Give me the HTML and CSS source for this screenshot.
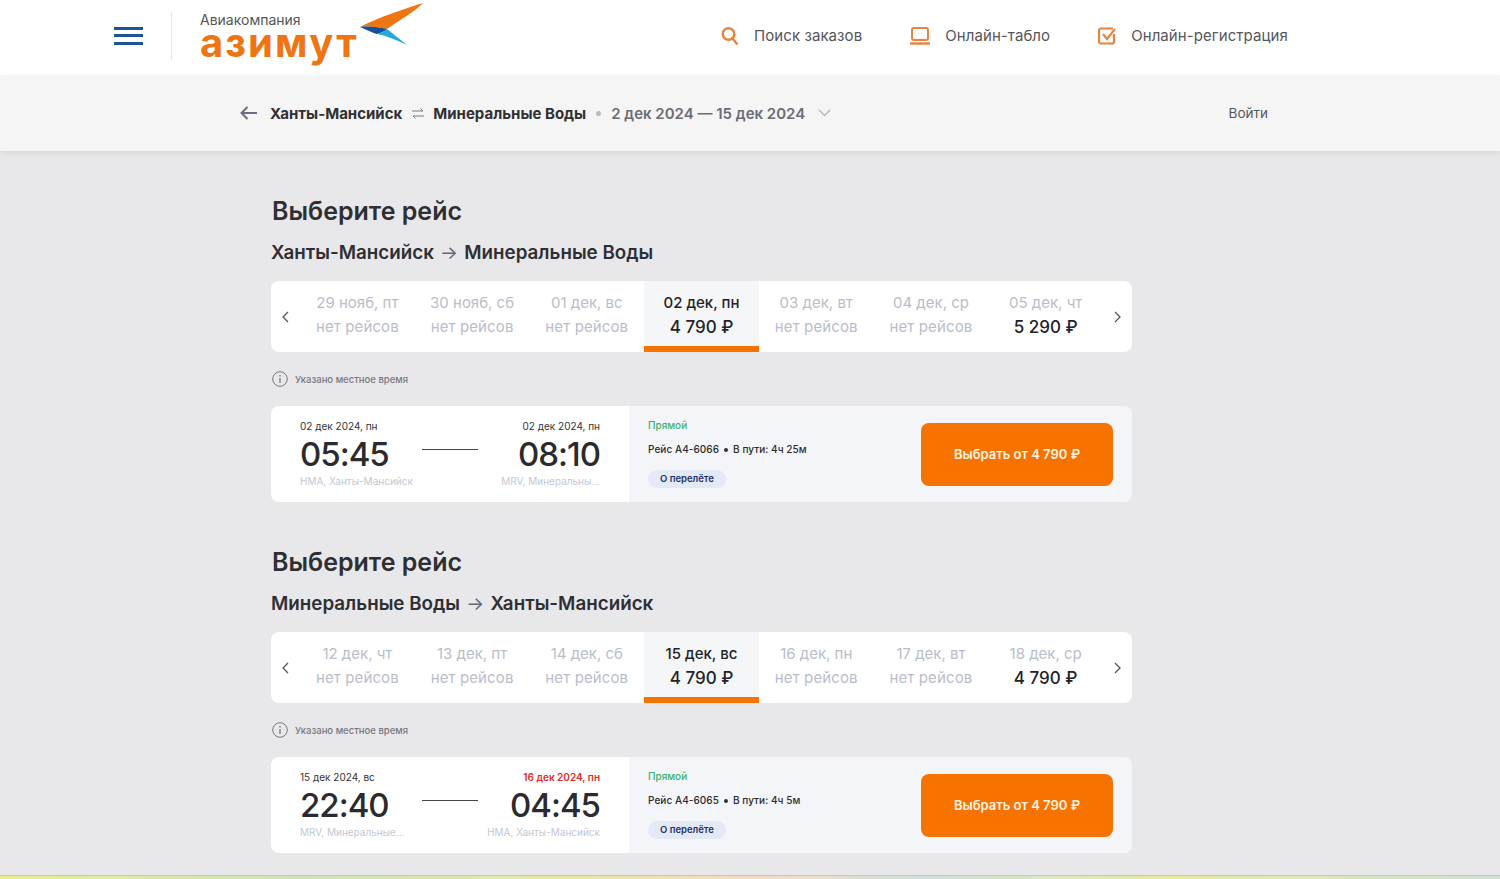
FILE: index.html
```html
<!DOCTYPE html>
<html lang="ru">
<head>
  <meta charset="UTF-8" />
  <title>Азимут - Выберите рейс</title>
  <link rel="stylesheet" href="styles.css">
</head>
<body>
  <header class="top-bar">
    <button class="burger"><span></span><span></span><span></span></button>
    <div class="logo">
      <div class="logo-small">Авиакомпания</div>
      <div class="logo-big">азимут</div>
      <svg class="logo-wing" width="66" height="44" viewBox="0 0 66 44">
        <path d="M64 1C48 6 20 15 1 25C10 24 20 25 28 27C40 18 56 10 64 1Z" fill="#ee7512"/>
        <path d="M1 25C8 28 14 31 18 32C22 31 26 29 28 27C20 25 10 24 1 25Z" fill="#134f9c"/>
        <path d="M18 32C22 31 26 29 28 27L48 43C38 38 28 34 18 32Z" fill="#23a9d6"/>
      </svg>
    </div>
    <nav class="top-nav">
      <a class="nav-link">
        <svg width="18" height="20" viewBox="0 0 18 20" fill="none" stroke="#e8823c" stroke-width="2.400"><circle cx="7.500" cy="8" r="5.800"/><path d="M11.500 12.500L16.500 18.500"/></svg>
        Поиск заказов
      </a>
      <a class="nav-link">
        <svg width="20" height="18" viewBox="0 0 20 18" fill="none" stroke="#e8823c" stroke-width="2"><rect x="2" y="1" width="16" height="12" rx="2"/><path d="M0 16.500H20" stroke-width="2.400"/></svg>
        Онлайн-табло
      </a>
      <a class="nav-link">
        <svg width="18" height="18" viewBox="0 0 18 18" fill="none" stroke="#e8823c" stroke-width="2.200"><path d="M15 1.500H3a2 2 0 0 0-2 2v11a2 2 0 0 0 2 2h11a2 2 0 0 0 2-2V7"/><path d="M5 7L9 12L17 2"/></svg>
        Онлайн-регистрация
      </a>
    </nav>
  </header>

  <div class="sub-bar">
    <svg width="17" height="14" viewBox="0 0 17 14" fill="none" stroke="#6c6c80" stroke-width="2"><path d="M17 7H2M7.500 1L1.500 7L7.500 13"/></svg>
    <b class="sub-city first">Ханты-Мансийск</b>
    <svg class="swap" width="12" height="11" viewBox="0 0 12 11" fill="none" stroke="#77778a"><path d="M0 3H11M8.500 .5L11 3M12 8H1M3.500 10.500L1 8"/></svg>
    <b class="sub-city">Минеральные Воды</b>
    <i class="sub-dot"></i>
    <span class="sub-dates">2 дек 2024 — 15 дек 2024</span>
    <svg class="sub-chevron" width="13" height="8" viewBox="0 0 13 8" fill="none" stroke="#b4b8c6" stroke-width="1.500"><path d="M1 1L6.500 6.500L12 1"/></svg>
    <a class="login">Войти</a>
  </div>

  <main>
    <section class="leg">
      <h1>Выберите рейс</h1>
      <h2>Ханты-Мансийск <span class="route-arrow">→</span> Минеральные Воды</h2>
      <div class="dates">
        <div class="arrow"><svg width="7" height="12" viewBox="0 0 7 12" fill="none" stroke="#555" stroke-width="1.300"><path d="M6 1L1 6L6 11"/></svg></div>
        <div class="day"><span>29 нояб, пт</span><span class="none">нет рейсов</span></div>
        <div class="day"><span>30 нояб, сб</span><span class="none">нет рейсов</span></div>
        <div class="day"><span>01 дек, вс</span><span class="none">нет рейсов</span></div>
        <div class="day active"><span>02 дек, пн</span><span class="price">4 790 ₽</span></div>
        <div class="day"><span>03 дек, вт</span><span class="none">нет рейсов</span></div>
        <div class="day"><span>04 дек, ср</span><span class="none">нет рейсов</span></div>
        <div class="day"><span>05 дек, чт</span><span class="price">5 290 ₽</span></div>
        <div class="arrow"><svg width="7" height="12" viewBox="0 0 7 12" fill="none" stroke="#555" stroke-width="1.300"><path d="M1 1L6 6L1 11"/></svg></div>
      </div>
      <div class="note">
        <svg width="16" height="16" viewBox="0 0 16 16" fill="none" stroke="#77777f"><circle cx="8" cy="8" r="7.300"/><path d="M8 7V12M8 4V5.500" stroke-width="1.300"/></svg>
        Указано местное время
      </div>
      <div class="flight">
        <div class="flight-times">
          <div class="point">
            <div class="f-date">02 дек 2024, пн</div>
            <div class="f-time">05:45</div>
            <div class="f-place">HMA, Ханты-Мансийск</div>
          </div>
          <div class="f-line"></div>
          <div class="point end">
            <div class="f-date">02 дек 2024, пн</div>
            <div class="f-time">08:10</div>
            <div class="f-place">MRV, Минеральны...</div>
          </div>
        </div>
        <div class="flight-info">
          <div class="info-text">
            <div class="direct">Прямой</div>
            <div class="f-number">Рейс А4-6066 <i></i> В пути: 4ч 25м</div>
            <span class="about">О перелёте</span>
          </div>
          <button class="choose">Выбрать от 4 790 ₽</button>
        </div>
      </div>
    </section>

    <section class="leg">
      <h1>Выберите рейс</h1>
      <h2>Минеральные Воды <span class="route-arrow">→</span> Ханты-Мансийск</h2>
      <div class="dates">
        <div class="arrow"><svg width="7" height="12" viewBox="0 0 7 12" fill="none" stroke="#555" stroke-width="1.300"><path d="M6 1L1 6L6 11"/></svg></div>
        <div class="day"><span>12 дек, чт</span><span class="none">нет рейсов</span></div>
        <div class="day"><span>13 дек, пт</span><span class="none">нет рейсов</span></div>
        <div class="day"><span>14 дек, сб</span><span class="none">нет рейсов</span></div>
        <div class="day active"><span>15 дек, вс</span><span class="price">4 790 ₽</span></div>
        <div class="day"><span>16 дек, пн</span><span class="none">нет рейсов</span></div>
        <div class="day"><span>17 дек, вт</span><span class="none">нет рейсов</span></div>
        <div class="day"><span>18 дек, ср</span><span class="price">4 790 ₽</span></div>
        <div class="arrow"><svg width="7" height="12" viewBox="0 0 7 12" fill="none" stroke="#555" stroke-width="1.300"><path d="M1 1L6 6L1 11"/></svg></div>
      </div>
      <div class="note">
        <svg width="16" height="16" viewBox="0 0 16 16" fill="none" stroke="#77777f"><circle cx="8" cy="8" r="7.300"/><path d="M8 7V12M8 4V5.500" stroke-width="1.300"/></svg>
        Указано местное время
      </div>
      <div class="flight">
        <div class="flight-times">
          <div class="point">
            <div class="f-date">15 дек 2024, вс</div>
            <div class="f-time">22:40</div>
            <div class="f-place">MRV, Минеральные...</div>
          </div>
          <div class="f-line"></div>
          <div class="point end">
            <div class="f-date next-day">16 дек 2024, пн</div>
            <div class="f-time">04:45</div>
            <div class="f-place">HMA, Ханты-Мансийск</div>
          </div>
        </div>
        <div class="flight-info">
          <div class="info-text">
            <div class="direct">Прямой</div>
            <div class="f-number">Рейс А4-6065 <i></i> В пути: 4ч 5м</div>
            <span class="about">О перелёте</span>
          </div>
          <button class="choose">Выбрать от 4 790 ₽</button>
        </div>
      </div>
    </section>
  </main>
  <div class="bottom-strip"></div>
</body>
</html>
```

FILE: styles.css
```css
* { margin:0; padding:0; box-sizing:border-box; }
html, body { height:879px; overflow:hidden; }
body { font-family:'Inter','Liberation Sans',sans-serif; background:#e8e8ea; color:#2b2b2f; }
button { font-family:inherit; border:none; background:none; cursor:pointer; }

.top-bar { height:75px; background:#fff; display:flex; align-items:center; padding:0 0 4px 114px; }
.burger { width:29px; height:18px; display:flex; flex-direction:column; justify-content:space-between; }
.burger span { display:block; height:3px; background:#1b5596; }
.logo { position:relative; width:253px; height:48px; margin-left:28px; padding-left:28px; border-left:1px solid #e4e4e4; }
.logo-small { font-size:14px; line-height:16px; color:#555; }
.logo-big { font-size:40px; line-height:33px; font-weight:700; color:#ee7512; letter-spacing:2px; margin-top:-2px; }
.logo-wing { position:absolute; left:187px; top:-10px; }

.top-nav { display:flex; margin-left:297px; gap:48px; }
.nav-link { display:flex; align-items:center; gap:15px; font-size:15px; letter-spacing:0.08px; color:#55555a; }

.sub-bar { height:76px; background:#f5f5f5; box-shadow:0 2px 6px rgba(0,0,0,0.08); display:flex; align-items:center; padding:0 232px 0 240px; position:relative; }
.sub-city { font-size:15px; font-weight:700; color:#303034; }
.sub-city.first { margin-left:13px; }
.swap { margin:0 9px 0 10px; }
.sub-dot { width:5px; height:5px; border-radius:50%; background:#b9bcc6; margin:0 10px; }
.sub-dates { font-size:15px; font-weight:600; color:#6c6c78; }
.sub-chevron { margin-left:13px; }
.login { margin-left:auto; font-size:13.500px; color:#55555a; }

main { width:861px; margin-left:271px; height:724px; padding-top:45px; }
.leg { margin-bottom:45px; }
h1 { font-size:25px; line-height:30px; font-weight:600; color:#2f2f33; padding-left:1px; }
h2 { font-size:18.800px; line-height:24px; font-weight:600; color:#2f2f33; margin-top:15px; }
.route-arrow { color:#66667a; font-weight:400; margin:0 1.500px; }

.dates { margin-top:16px; height:71px; background:#fff; border-radius:8px; display:flex; overflow:hidden; }
.arrow { width:29px; display:flex; align-items:center; justify-content:center; }
.day { flex:1; display:flex; flex-direction:column; align-items:center; padding-top:10px; font-size:15px; line-height:24px; color:#b9bdca; white-space:nowrap; }
.day .none { letter-spacing:0.12px; }
.day .price { color:#232327; font-size:17px; font-weight:500; }
.day.active { background:#f5f6f8; color:#232327; font-weight:500; border-bottom:6px solid #f77300; }

.note { display:flex; align-items:center; gap:7px; height:16px; margin-top:19px; padding-left:1px; font-size:9.500px; font-weight:500; color:#77777f; }

.flight { margin-top:19px; height:96px; display:flex; border-radius:8px; overflow:hidden; }
.flight-times { width:358px; background:#fff; padding:0 29px; display:flex; justify-content:space-between; }
.point { width:122px; padding-top:14px; white-space:nowrap; }
.point.end { text-align:right; display:flex; flex-direction:column; align-items:flex-end; }
.f-date { font-size:10px; line-height:13px; color:#333; }
.f-date.next-day { color:#e02a2a; font-weight:600; }
.f-time { font-size:33px; line-height:41px; margin-top:1px; font-weight:500; letter-spacing:-1px; color:#2b2b2f; }
.f-place { font-size:10px; line-height:13px; color:#c3c7d3; }
.f-line { width:57px; height:1px; background:#444; margin-top:43px; }

.flight-info { flex:1; background:#f3f5f8; padding:13px 19px 14px 19px; display:flex; justify-content:space-between; align-items:center; }
.info-text { display:flex; flex-direction:column; align-items:flex-start; height:69px; }
.direct { font-size:10px; line-height:13px; color:#3bb06c; font-weight:500; }
.f-number { margin-top:11px; font-size:10px; line-height:13px; letter-spacing:0.06px; color:#2b2b2f; font-weight:500; display:flex; align-items:center; gap:5px; }
.f-number i { width:4px; height:4px; border-radius:50%; background:#333; }
.about { margin-top:auto; font-size:9.500px; line-height:18px; font-weight:600; color:#1f2f66; background:#e4eaf5; padding:0 12px; border-radius:9px; }
.choose { width:192px; height:63px; margin-top:1px; background:#f77300; color:#fff3e6; font-size:13px; font-weight:600; border-radius:8px; }

.bottom-strip { height:5px; border-top:1px solid #c2c6c4; background:linear-gradient(90deg,#e8ee90 0%,#cfe3b4 20%,#e6ea9c 38%,#f3dcc0 50%,#cfe0dc 62%,#e6ec98 78%,#cfe0d4 100%); }
```
